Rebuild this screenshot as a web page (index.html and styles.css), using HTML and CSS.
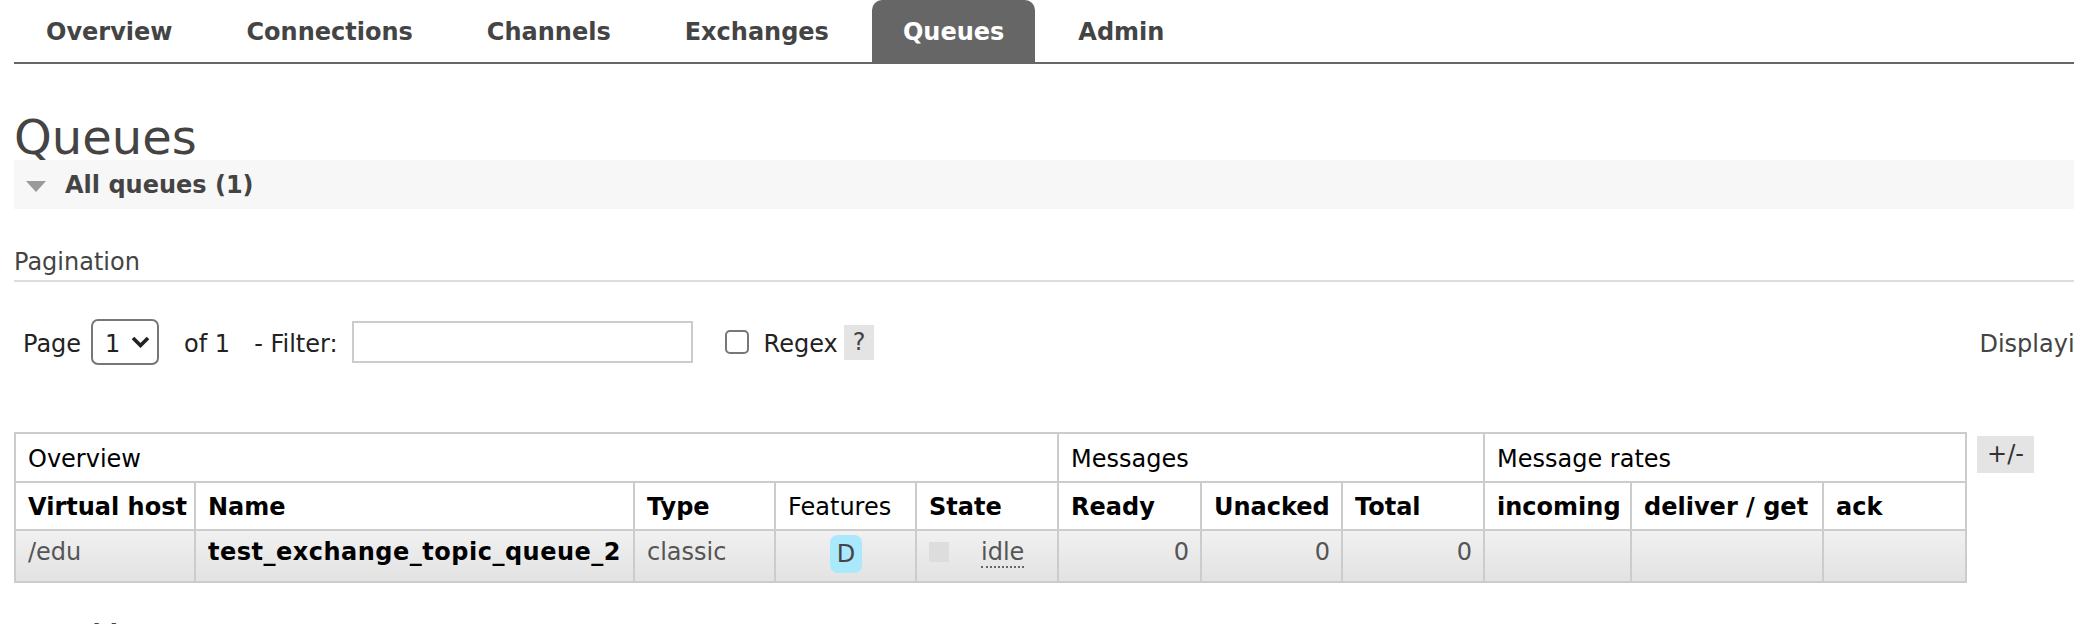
FILE: index.html
```html
<!DOCTYPE html>
<html lang="en">
<head>
  <meta charset="UTF-8">
  <title>RabbitMQ Management</title>
  <link rel="stylesheet" href="styles.css">
</head>
<body>

  <!-- top menu -->
  <ul id="tabs">
    <li><a href="#">Overview</a></li>
    <li><a href="#">Connections</a></li>
    <li><a href="#">Channels</a></li>
    <li><a href="#">Exchanges</a></li>
    <li><a href="#" class="selected">Queues</a></li>
    <li><a href="#">Admin</a></li>
  </ul>

  <div id="main">
    <h1>Queues</h1>

    <div class="section">
      <h2><span class="arrow-down"></span>All queues (1)</h2>
      <div class="hider">
        <h3>Pagination</h3>
        <div class="pagination">
          <span class="txt label-page">Page</span>
          <span class="select"><span class="txt">1</span>
            <svg width="19" height="12" viewBox="0 0 19 12"><path d="M2 2 L9.5 9.5 L17 2" fill="none" stroke="#222" stroke-width="3.6"/></svg>
          </span>
          <span class="txt of">of 1</span>
          <span class="txt filter-label">- Filter:</span>
          <input type="text" class="filter">
          <span class="checkbox"></span>
          <span class="txt regex">Regex</span>
          <span class="help">?</span>
          <span class="txt paging-info">Displaying 1 item , page size up to:</span>
        </div>

        <div class="list-wrap">
          <table class="list">
            <colgroup>
              <col style="width:180px"><col style="width:439px"><col style="width:141px">
              <col style="width:141px"><col style="width:142px"><col style="width:143px">
              <col style="width:141px"><col style="width:142px"><col style="width:147px">
              <col style="width:192px"><col style="width:143px">
            </colgroup>
            <thead>
              <tr class="group">
                <th colspan="5">Overview</th>
                <th colspan="3">Messages</th>
                <th colspan="3">Message rates</th>
              </tr>
              <tr class="cols">
                <th>Virtual host</th>
                <th>Name</th>
                <th>Type</th>
                <th class="plain">Features</th>
                <th>State</th>
                <th>Ready</th>
                <th>Unacked</th>
                <th>Total</th>
                <th>incoming</th>
                <th>deliver / get</th>
                <th>ack</th>
              </tr>
            </thead>
            <tbody>
              <tr class="alt1">
                <td>/edu</td>
                <td class="name">test_exchange_topic_queue_2</td>
                <td>classic</td>
                <td class="c"><abbr class="feature">D</abbr></td>
                <td><span class="state-grey"></span><abbr class="state">idle</abbr></td>
                <td class="r">0</td>
                <td class="r">0</td>
                <td class="r">0</td>
                <td></td>
                <td></td>
                <td></td>
              </tr>
            </tbody>
          </table>
          <span class="toggle-cols">+/-</span>
        </div>
      </div>
    </div>

    <div class="section-hidden">
      <h2><span class="arrow-right"></span>Add a new queue</h2>
    </div>
  </div>

</body>
</html>
```

FILE: styles.css
```css
html, body {
  overflow: hidden;
}
body {
  margin: 0;
  font-family: "DejaVu Sans", Verdana, sans-serif;
  font-size: 24px;
  color: #444;
}

/* menu */
#tabs {
  display: flex;
  list-style: none;
  margin: 0 0 0 14px;
  padding: 0 0 0 1px;
  border-bottom: 2px solid #666;
}
#tabs li {
  margin-right: 12px;
}
#tabs a {
  display: block;
  padding: 3px 31px 0;
  line-height: 59px;
  font-weight: bold;
  color: #444;
  text-decoration: none;
  border-radius: 10px 10px 0 0;
}
#tabs a.selected {
  background-color: #666;
  color: #fff;
}

#main {
  padding-left: 14px;
}
h1 {
  margin: 51px 0 0;
  font-size: 48px;
  font-weight: normal;
  line-height: 45px;
}

.section h2,
.section-hidden h2 {
  display: flex;
  align-items: center;
  height: 49px;
  margin: 0;
  padding-left: 12px;
  font-size: 24px;
  line-height: 28px;
  font-weight: bold;
}
.section h2 {
  background-color: #f7f7f7;
}
.arrow-down {
  width: 0;
  height: 0;
  margin: 3px 19px 0 0;
  border-left: 10px solid transparent;
  border-right: 10px solid transparent;
  border-top: 11px solid #999;
}
.section-hidden {
  margin-top: 26px;
}
.section-hidden h2 {
  padding-left: 19px;
}
.arrow-right {
  width: 0;
  height: 0;
  margin-right: 21px;
  border-top: 10px solid transparent;
  border-bottom: 10px solid transparent;
  border-left: 11px solid #aaa;
}

h3 {
  margin: 39px 0 0;
  padding-bottom: 4px;
  font-size: 24px;
  font-weight: normal;
  line-height: 28px;
  border-bottom: 2px solid #ddd;
}

/* pagination row */
.pagination {
  display: flex;
  align-items: center;
  height: 46px;
  margin-top: 37px;
  white-space: nowrap;
  color: #222;
}
.pagination > * {
  flex-shrink: 0;
}
.pagination .txt {
  padding-top: 4px;
}
.label-page {
  margin-left: 9px;
}
.select {
  display: flex;
  align-items: center;
  box-sizing: border-box;
  width: 68px;
  height: 46px;
  margin-left: 10px;
  padding-left: 12px;
  border: 2px solid #777;
  border-radius: 7px;
}
.select svg {
  margin-left: 11px;
}
.of {
  margin-left: 25px;
}
.filter-label {
  margin-left: 24px;
}
.filter {
  box-sizing: border-box;
  width: 341px;
  height: 42px;
  margin: 0 0 0 14px;
  padding: 0 8px;
  border: 2px solid #ccc;
  font: inherit;
}
.checkbox {
  box-sizing: border-box;
  width: 24px;
  height: 24px;
  margin-left: 32px;
  border: 2px solid #777;
  border-radius: 5px;
}
.regex {
  margin-left: 15px;
}
.help {
  margin-left: 6px;
  padding: 0 9px;
  line-height: 35px;
  background-color: #e4e4e4;
  color: #444;
}
.paging-info {
  margin-left: 1105px;
  color: #444;
}

/* queue table */
.list-wrap {
  display: flex;
  align-items: flex-start;
  margin-top: 67px;
}
table.list {
  flex-shrink: 0;
  table-layout: fixed;
  width: 1951px;
  border-collapse: collapse;
  border: 2px solid #ccc;
}
.list th, .list td {
  border: 2px solid #ccc;
  padding: 10px 11px 8px 12px;
  line-height: 28px;
  text-align: left;
  vertical-align: top;
  white-space: nowrap;
  overflow: hidden;
}
.list th {
  color: #000;
}
.list tr.group th {
  font-weight: normal;
  padding-top: 11px;
}
.list th.plain {
  font-weight: normal;
}
.list td {
  padding-top: 7px;
  padding-bottom: 8px;
  color: #555;
}
.list tr.alt1 {
  background: linear-gradient(to bottom, #f1f1f1, #e2e2e2);
}
.list td.name {
  font-weight: bold;
  letter-spacing: 0.5px;
  color: #000;
}
.list td.c {
  padding-top: 4px;
  text-align: center;
}
.list td.r {
  text-align: right;
}
abbr.feature {
  display: inline-block;
  padding: 5px 7px;
  vertical-align: -4px;
  background-color: #aae8fb;
  border-radius: 8px;
  color: #444;
  text-decoration: none;
}
.state-grey {
  display: inline-block;
  width: 20px;
  height: 20px;
  margin-right: 32px;
  vertical-align: -2px;
  background-color: #ddd;
}
abbr.state {
  text-decoration: none;
  border-bottom: 2px dotted #666;
}
.toggle-cols {
  flex-shrink: 0;
  margin: 4px 0 0 10px;
  padding: 0 10px;
  line-height: 37px;
  background-color: #e4e4e4;
  color: #333;
}
```
